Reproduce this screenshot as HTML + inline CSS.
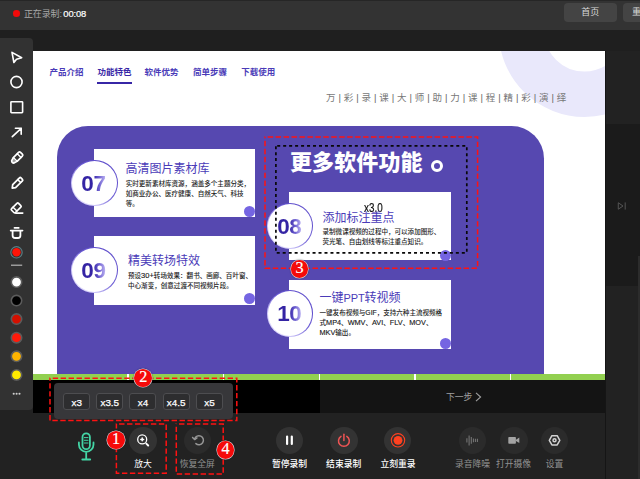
<!DOCTYPE html>
<html lang="zh-CN">
<head>
<meta charset="utf-8">
<title>万彩录课大师</title>
<style>
*{box-sizing:border-box;margin:0;padding:0}
html,body{width:640px;height:479px;overflow:hidden;background:#222}
body{font-family:"Liberation Sans","Noto Sans CJK SC",sans-serif;position:relative;color:#fff}
.abs{position:absolute}
#topbar{left:0;top:0;width:640px;height:30.2px;background:#333;border-top:.7px solid #262626}
#band{left:0;top:30.2px;width:640px;height:20.8px;background:#1f1f1f}
#rec-dot{left:13.2px;top:10px;width:6.6px;height:6.6px;border-radius:50%;background:#f20a0a}
#rec-text{left:24px;top:6.5px;font-size:9px;line-height:13px;color:#a8a8a8;white-space:nowrap;letter-spacing:-0.15px}
#rec-text b{color:#fff;font-weight:normal;font-size:9.4px;-webkit-text-stroke:.2px #fff;margin-left:-.8px}
.topbtn{top:3.2px;height:18.7px;background:#444;border-radius:4px;font-size:9px;line-height:18.9px;text-align:center;color:#d8d8d8}
#toolbar{left:0;top:38px;width:33.2px;height:371.7px;background:#323232;border-radius:0 4px 4px 0}
#rpanel{left:605.2px;top:51px;width:35px;height:428px;background:#222;border-left:1px solid #151515}
#rpanel2{left:606.2px;top:124px;width:34px;height:162px;background:#1b1b1b}
#slide{left:33px;top:51px;width:572.2px;height:323px;background:#fff;overflow:hidden}
#green{left:33px;top:373.7px;width:572.2px;height:6.6px;background:#92d050}
.tick{top:373.7px;width:1.3px;height:6.6px;background:#fff}
#blackL{left:33px;top:380.3px;width:286.5px;height:32.7px;background:#000}
#blackR{left:319.5px;top:380.3px;width:285.7px;height:32.7px;background:#141414}
#next{left:446px;top:391px;font-size:8.8px;line-height:13px;color:#a0a0a0;white-space:nowrap}
/* slide content */
.nav{top:15.7px;font-size:8.5px;line-height:12px;font-weight:bold;color:#4a3bb8;white-space:nowrap}
#navline{left:64px;top:31px;width:34.5px;height:2.2px;background:#3726a6}
#tagline{left:293.1px;top:40.6px;font-size:9.5px;line-height:13px;color:#777;white-space:nowrap}
#tagline span{display:inline-block;width:17.75px}
#tagline i{font-style:normal;display:inline-block;width:8.25px;text-align:center;color:#666}
#purple{left:24px;top:75.9px;width:487.2px;height:330px;background:#5648b0;border-radius:31px 32.5px 0 0}
.card{background:#fff}
.num{width:46.7px;height:46.7px;border-radius:50%;border:1.2px solid transparent;background:linear-gradient(#fff,#fff) padding-box,linear-gradient(225deg,#5644c6 0%,#6a5ad4 45%,#cfc8fa 75%,#f4f2ff 100%) border-box;text-align:center;font-family:"Liberation Sans",sans-serif;font-weight:bold;font-size:22.5px;line-height:45.8px;letter-spacing:-0.3px;padding-right:1.5px}
.num span{background:linear-gradient(90deg,#3424a4 0%,#3424a4 48%,#6d5fd0 72%,#c4bbf6 100%);-webkit-background-clip:text;background-clip:text;color:transparent}
.ttl{font-size:12px;line-height:14px;color:#4a3bb8;white-space:nowrap}
.desc{font-size:6.55px;line-height:10px;color:#1c1c1c;font-weight:500;white-space:nowrap}
.en{font-size:7.3px;-webkit-text-stroke:.15px #1c1c1c}
.dot{width:11px;height:11px;border-radius:50%;background:#7565e2}
/* annotations */
.rd{border:1px dashed #ee1c1c}
.badge{width:17.8px;height:17.8px;margin:.2px;border-radius:50%;background:#f50a0a;box-shadow:0 0 0 .55px #d4e2ea,0 0 1.2px 1px rgba(0,0,0,.25);color:#fff;font-size:16.2px;line-height:17.8px;text-align:center;font-family:"Liberation Serif",serif;-webkit-text-stroke:.2px #fff}
/* bottom */
.rbtn{width:27.5px;height:27.5px;border-radius:50%;background:#333}
.rbtn.dim{background:#2b2b2b}
.lbl{font-size:8.8px;line-height:12px;white-space:nowrap;text-align:center;width:60px;color:#fff}
.lbl.dim{color:#919191}
#zpanel{left:53.7px;top:383px;width:179px;height:35.8px;background:#37373a;border-radius:4px}
.zb{top:10.2px;width:27px;height:17.2px;border:1px solid #4d4d50;border-radius:3px;background:#2d2d2f;font-size:9.9px;line-height:17.3px;text-align:center;color:#fff;-webkit-text-stroke:.25px #fff}
</style>
</head>
<body>
<div class="abs" id="topbar"></div>
<div class="abs" id="band"></div>
<div class="abs" id="rec-dot"></div>
<div class="abs" id="rec-text">正在录制: <b>00:08</b></div>
<div class="abs topbtn" style="left:563.7px;width:53.3px">首页</div>
<div class="abs topbtn" style="left:623px;width:30px;text-align:left;padding-left:9px">重录</div>

<div class="abs" id="rpanel"></div>
<div class="abs" id="rpanel2"></div>
<div class="abs" style="left:638.3px;top:255.5px;width:1.7px;height:224px;background:#2c2c2c"></div>

<!-- SLIDE -->
<div class="abs" id="slide"><div class="abs" style="left:0;top:-0.5px;width:572.5px;height:324px">
  <svg class="abs" style="left:0;top:0" width="573" height="324" viewBox="0 0 573 324"><circle cx="551.5" cy="-19.9" r="63.1" fill="none" stroke="#e9e8fb" stroke-width="45.4"/></svg>
  <div class="abs nav" style="left:16.5px">产品介绍</div>
  <div class="abs nav" style="left:64.5px;color:#3726a6">功能特色</div>
  <div class="abs nav" style="left:111.5px">软件优势</div>
  <div class="abs nav" style="left:160px">简单步骤</div>
  <div class="abs nav" style="left:208.2px">下载使用</div>
  <div class="abs" id="navline"></div>
  <div class="abs" id="tagline"><span>万<i>|</i></span><span>彩<i>|</i></span><span>录<i>|</i></span><span>课<i>|</i></span><span>大<i>|</i></span><span>师<i>|</i></span><span>助<i>|</i></span><span>力<i>|</i></span><span>课<i>|</i></span><span>程<i>|</i></span><span>精<i>|</i></span><span>彩<i>|</i></span><span>演<i>|</i></span><span>绎</span></div>

  <div class="abs" id="purple"></div>

  <!-- card 07 -->
  <div class="abs card" style="left:61px;top:98.2px;width:161px;height:68.3px"></div>
  <div class="abs ttl" style="left:92.5px;top:111.2px">高清图片素材库</div>
  <div class="abs desc" style="left:92.7px;top:128px">实时更新素材库资源，涵盖多个主题分类，<br>如商业办公、医疗健康、自然天气、科技<br>等。</div>
  <div class="abs dot" style="left:211px;top:155px"></div>
  <div class="abs num" style="left:37.95px;top:109.25px"><span>07</span></div>

  <!-- card 09 -->
  <div class="abs card" style="left:61px;top:185.2px;width:161px;height:69.5px"></div>
  <div class="abs ttl" style="left:95px;top:203.3px">精美转场特效</div>
  <div class="abs desc" style="left:95px;top:220px">预设<span class="en" style="font-size:7.5px">30+</span>转场效果：翻书、画廊、百叶窗、<br>中心渐变，创意过渡不同视频片段。</div>
  <div class="abs dot" style="left:210.5px;top:242px"></div>
  <div class="abs num" style="left:37.95px;top:196.15px"><span>09</span></div>

  <!-- heading -->
  <div class="abs" style="left:257px;top:97.5px;font-size:22px;line-height:30px;font-weight:900;color:#fff;white-space:nowrap;letter-spacing:0.1px">更多软件功能</div>
  <div class="abs" style="left:397.7px;top:109.1px;width:12.8px;height:12.8px;border:3.3px solid #fff;border-radius:50%"></div>

  <!-- card 08 -->
  <div class="abs card" style="left:256.2px;top:141.6px;width:161.8px;height:68.4px"></div>
  <div class="abs" style="left:331px;top:151px;font-size:12px;line-height:12px;color:#111;font-family:'Liberation Sans',sans-serif;transform:scaleX(0.82);transform-origin:0 0;-webkit-text-stroke:.2px #111">x3.0</div>
  <div class="abs ttl" style="left:289.5px;top:160.8px">添加标注重点</div>
  <div class="abs desc" style="left:289.5px;top:176.5px">录制微课视频的过程中，可以添加图形、<br>荧光笔、自由划线等标注重点知识。</div>
  <div class="abs dot" style="left:407px;top:199.5px"></div>
  <div class="abs num" style="left:233.75px;top:152.15px"><span>08</span></div>

  <!-- card 10 -->
  <div class="abs card" style="left:256.2px;top:229.5px;width:161.8px;height:68.8px"></div>
  <div class="abs ttl" style="left:286.5px;top:240px">一键<span style="font-size:11px;letter-spacing:-0.15px">PPT</span>转视频</div>
  <div class="abs desc" style="left:286.5px;top:257.5px">一键发布视频与<span class="en" style="font-size:6.8px">GIF</span>，支持六种主流视频格<br>式<span class="en">MP4</span>、<span class="en">WMV</span>、<span class="en">AVI</span>、<span class="en">FLV</span>、<span class="en">MOV</span>、<br><span class="en">MKV</span>输出。</div>
  <div class="abs dot" style="left:407px;top:287px"></div>
  <div class="abs num" style="left:233.75px;top:239.95px"><span>10</span></div>
</div></div>

<!-- green bar + ticks -->
<div class="abs" id="green"></div>
<div class="abs tick" style="left:127.3px"></div>
<div class="abs tick" style="left:222.7px"></div>
<div class="abs tick" style="left:318.5px"></div>
<div class="abs tick" style="left:414.3px"></div>
<div class="abs tick" style="left:509.7px"></div>
<div class="abs" id="blackL"></div>
<div class="abs" id="blackR"></div>
<div class="abs" id="next">下一步 <svg width="7" height="10" viewBox="0 0 7 10" style="vertical-align:-1.5px;margin-left:0"><path d="M1 0.8 L5.6 5 L1 9.2" fill="none" stroke="#a0a0a0" stroke-width="1.1"/></svg></div>

<!-- annotations on slide -->

<!-- toolbar -->
<div class="abs" id="toolbar"></div>

<!-- zoom panel -->
<div class="abs" id="zpanel">
  <div class="abs zb" style="left:9.5px">x3</div>
  <div class="abs zb" style="left:42.6px">x3.5</div>
  <div class="abs zb" style="left:75.8px">x4</div>
  <div class="abs zb" style="left:109px">x4.5</div>
  <div class="abs zb" style="left:142.3px">x5</div>
</div>


<!-- bottom buttons -->
<div class="abs rbtn" style="left:129.3px;top:426.7px"></div>
<div class="abs lbl" style="left:113px;top:458.4px">放大</div>

<div class="abs rbtn dim" style="left:183.7px;top:426.7px"></div>
<div class="abs lbl dim" style="left:167.3px;top:458.4px">恢复全屏</div>

<div class="abs rbtn" style="left:275.7px;top:426.7px"></div>
<div class="abs lbl" style="left:259.5px;top:458.4px;font-weight:500">暂停录制</div>
<div class="abs rbtn" style="left:330px;top:426.7px"></div>
<div class="abs lbl" style="left:313.7px;top:458.4px;font-weight:500">结束录制</div>
<div class="abs rbtn" style="left:383.7px;top:426.7px"></div>
<div class="abs lbl" style="left:368px;top:458.4px;font-weight:500">立刻重录</div>

<div class="abs rbtn dim" style="left:458.7px;top:426.7px"></div>
<div class="abs lbl dim" style="left:442.5px;top:458.4px">录音降噪</div>
<div class="abs rbtn dim" style="left:500px;top:426.7px"></div>
<div class="abs lbl dim" style="left:483.5px;top:458.4px">打开摄像</div>
<div class="abs rbtn dim" style="left:540.7px;top:426.7px"></div>
<div class="abs lbl dim" style="left:524.5px;top:458.4px">设置</div>
<!-- icon overlay in page coordinates -->
<svg class="abs" style="left:0;top:0" width="640" height="479" viewBox="0 0 640 479" fill="none" stroke-linecap="round" stroke-linejoin="round">
  <!-- toolbar icons -->
  <g stroke="#fff" stroke-width="1.62">
    <path d="M12,52.4 L21.7,57.7 L16.5,59.3 L13.9,62.5 Z"/>
    <circle cx="16.5" cy="82" r="5.6"/>
    <rect x="10.9" y="101.7" width="11.7" height="11" rx="0.6"/>
    <path d="M12.3,136.7 L21.2,128.3 M15.4,128.3 H21.2 V134.2"/>
    <g transform="translate(16.9,157.8) rotate(45) scale(1.07)" stroke-width="1.6">
      <path d="M-2.5,-4.7 Q-2.5,-6 -1.2,-6 H1.2 Q2.5,-6 2.5,-4.7 V2.2 L1.5,5.4 Q0,6.9 -1.5,5.4 L-2.5,2.2 Z"/>
      <path d="M-2.5,2.2 H2.5" stroke-width="1.3"/><path d="M-1.6,3 L-0.9,5 Q0,5.8 0.9,5 L1.6,3 Z" fill="#fff" fill-opacity=".55" stroke="none"/>
      <path d="M-2.5,-3 H2.5" stroke-width="1.3"/>
    </g>
    <g transform="translate(16.9,183.4) rotate(45) scale(1.08)" stroke-width="1.6">
      <path d="M-1.9,-5.3 Q-1.9,-6.3 -0.9,-6.3 H0.9 Q1.9,-6.3 1.9,-5.3 V3.6 L0,6.1 L-1.9,3.6 Z"/>
      <path d="M-1.9,-3 H1.9" stroke-width="1.4"/>
    </g>
    <g transform="translate(16.2,207.9) rotate(45) scale(1.06)" stroke-width="1.6">
      <rect x="-2.6" y="-4.65" width="5.2" height="9.3" rx="1.1"/>
      <path d="M-2.6,1.6 H2.6" stroke-width="1.4"/>
    </g>
    <path d="M15.6,213.1 H22.8" stroke-width="1.6"/>
    <path d="M10.6,230.6 H22.6 M14.4,227.9 H18.8"/><path d="M12.6,230.8 V235.5 Q12.6,238 15.1,238 H17.9 Q20.4,238 20.4,235.5 V230.8" stroke-width="1.8"/>
  </g>
  <circle cx="16.5" cy="252.3" r="5.7" stroke="#5a7e85" stroke-width="1.1"/>
  <circle cx="16.5" cy="252.3" r="4.2" fill="#ff1408"/>
  <path d="M11,265.2 H22.2" stroke="#b4b4b4" stroke-width="1.2" stroke-linecap="butt"/>
  <g stroke="#5b5b5b" stroke-width="1.6">
    <circle cx="16.5" cy="282.1" r="5.2" fill="#fff"/>
    <circle cx="16.5" cy="300.6" r="5.2" fill="#000"/>
    <circle cx="16.5" cy="319.1" r="5.2" fill="#d41000"/>
    <circle cx="16.5" cy="337.7" r="5.2" fill="#ff1a0a"/>
    <circle cx="16.5" cy="356.3" r="5.2" fill="#ffb400"/>
    <circle cx="16.5" cy="374.9" r="5.2" fill="#ffea00"/>
  </g>
  <g fill="#cfcfcf"><circle cx="13.7" cy="393.7" r="1.05"/><circle cx="16.6" cy="393.7" r="1.05"/><circle cx="19.5" cy="393.7" r="1.05"/></g>
  <!-- side icon -->
  <path d="M618.6,203 L623,206 L618.6,209 Z M625.2,202.8 V209.2" stroke="#555" stroke-width="1" />

  <!-- mic -->
  <g stroke="#43d5a5" stroke-width="1.8">
    <rect x="82.5" y="433.4" width="7.4" height="15.8" rx="3.7"/>
    <path d="M78.9,442.5 V444.5 A7.3,7.3 0 0 0 93.5,444.5 V442.5 M86.2,452 V459.2 M82.3,459.5 H90.2"/>
    <path d="M84.3,437.6 H88 M84.3,440.3 H88 M84.3,443 H88" stroke-width="1"/>
  </g>
  <!-- magnifier -->
  <g stroke="#fff" stroke-width="1.3">
    <circle cx="142.2" cy="439.4" r="4.5"/>
    <path d="M146.3,443.6 L148.2,445.5" stroke-width="1.9"/>
    <path d="M140.8,439.4 H143.6 M142.2,438 V440.8" stroke-width="1.5"/>
  </g>
  <!-- restore -->
  <g stroke="#969696" stroke-width="1.45">
    <path d="M194.6,439 A4.5,4.5 0 1 1 195.9,443.6"/>
    <path d="M192.6,437.4 L194.6,439.6 L197,437.9" />
  </g>
  <!-- pause -->
  <path d="M287.1,436.5 V443.9 M291.8,436.5 V443.9" stroke="#fff" stroke-width="2.2"/>
  <!-- power -->
  <g stroke="#ee5454" stroke-width="1.5">
    <path d="M341,436.4 A5.4,5.4 0 1 0 346.8,436.4"/>
    <path d="M343.9,434.2 V440.6"/>
  </g>
  <!-- record -->
  <circle cx="398" cy="440.3" r="6.7" stroke="#ff4120" stroke-width="1.1"/>
  <circle cx="398" cy="440.3" r="4.4" fill="#ff4120"/>
  <!-- noise -->
  <g stroke="#777" stroke-width="1.05" stroke-linecap="butt">
    <path d="M466.9,438.2 V442.6 M469.1,435.4 V445.6 M471.3,437 V443.8 M473.4,438.6 V442.2 M475.4,438.8 V442 M477.4,438.8 V442"/>
  </g>
  <!-- camera -->
  <g fill="#a3a3a3" stroke="none">
    <rect x="508.3" y="437" width="7.6" height="6.7" rx="0.8"/>
    <path d="M516,439.8 L519.3,437.6 V443.1 L516,440.9 Z"/>
  </g>
  <!-- settings -->
  <g stroke="#d2d2d2" stroke-width="1.5">
    <path d="M549.3,440.3 L551.9,435.7 H557.2 L559.8,440.3 L557.2,444.9 H551.9 Z"/>
    <circle cx="554.5" cy="440.3" r="1.5"/>
  </g>

  <!-- dashed annotation rects -->
  <g stroke="#ff1212" stroke-width="1.5" stroke-dasharray="5.4 2.55" stroke-dashoffset="-2.7" stroke-linecap="butt" stroke-linejoin="miter">
    <rect x="265" y="136.9" width="212.6" height="131.3"/>
    <rect x="50" y="378.3" width="186.8" height="42.3"/>
    <rect x="116.4" y="424" width="49.8" height="49.2"/>
    <rect x="176.3" y="424" width="46.9" height="49.9"/>
  </g>
  <rect x="275.9" y="145.9" width="190.9" height="106.9" stroke="#080808" stroke-width="1.7" stroke-dasharray="3 2.97" stroke-dashoffset="-1.3" stroke-linecap="butt" stroke-linejoin="miter"/>
</svg>
<div class="abs badge" style="left:290.4px;top:259.7px">3</div>
<div class="abs badge" style="left:134.3px;top:368.8px">2</div>
<div class="abs badge" style="left:107.05px;top:430.9px">1</div>
<div class="abs badge" style="left:216.4px;top:440.7px">4</div>
</body>
</html>
